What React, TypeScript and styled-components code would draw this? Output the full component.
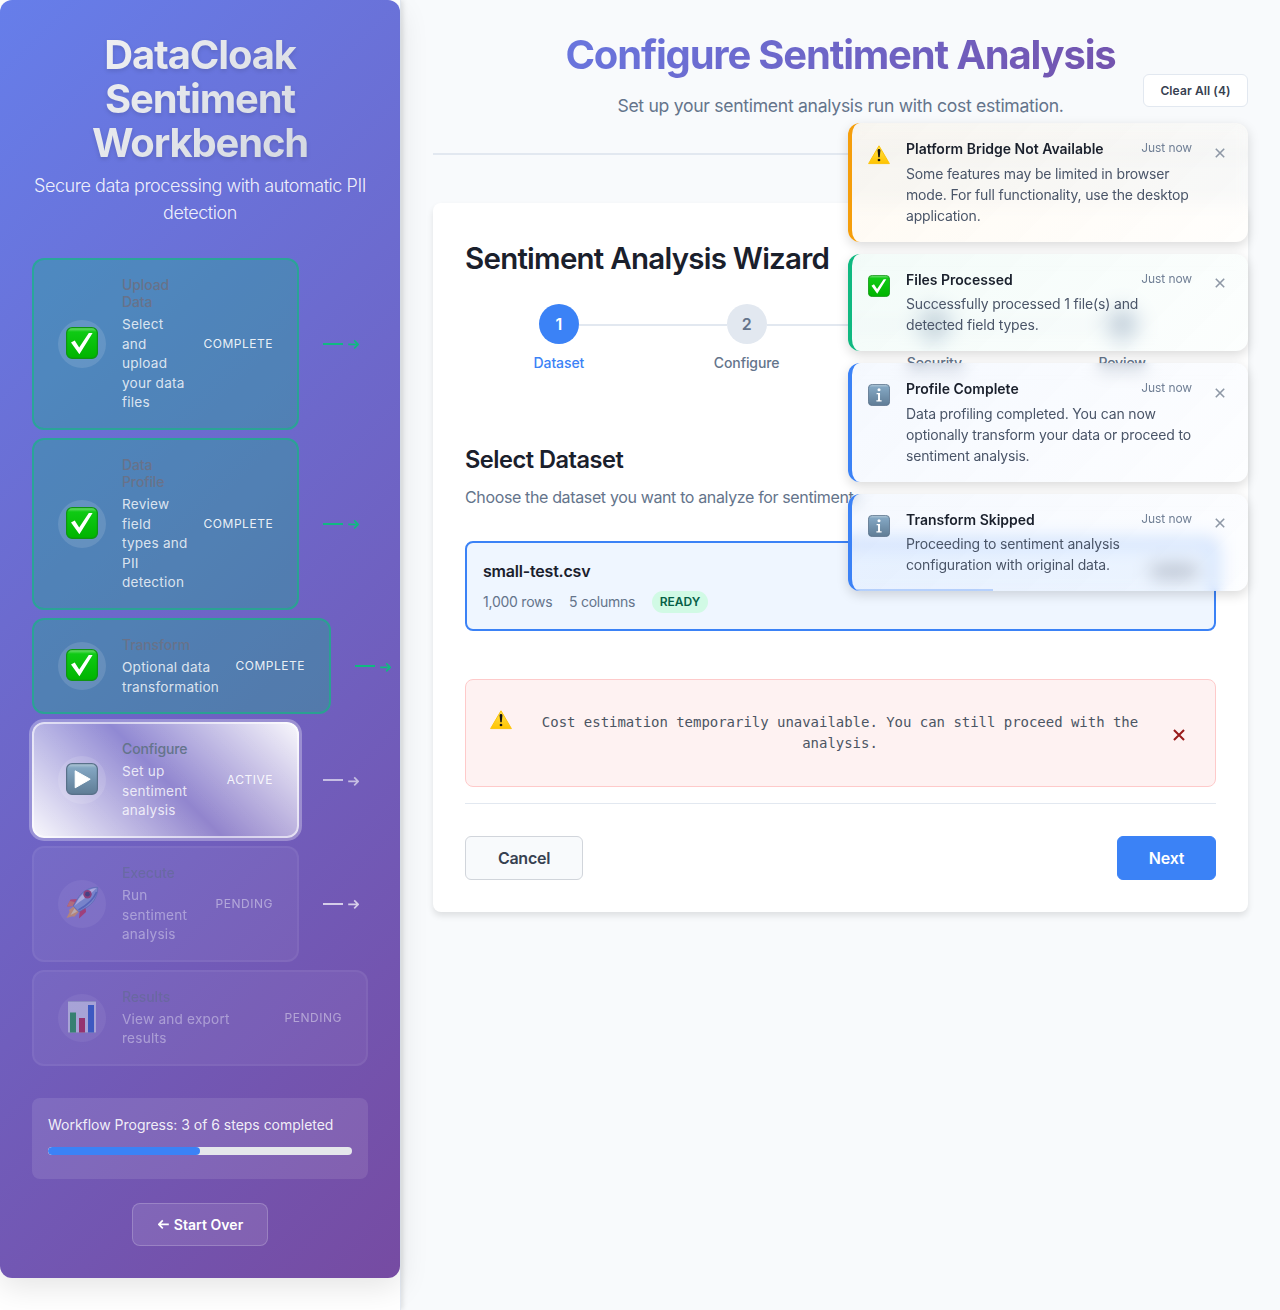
import React from 'react';
import styled, { createGlobalStyle, css } from 'styled-components';

const Global = createGlobalStyle`
  *, *::before, *::after { box-sizing: border-box; }
  body { margin: 0; background: #f8fafc; font-family: Inter, "Liberation Sans", sans-serif; color: #1a202c; }
  h1, h2, h3, p { margin: 0; }
  button { font-family: inherit; cursor: pointer; }
`;

const Page = styled.div`
  display: flex;
  min-height: 1310px;
  position: relative;
  overflow: hidden;
`;

const Aside = styled.aside`
  flex: none;
  width: 401px;
  background: #fff;
  border-right: 1px solid #e2e8f0;
  box-shadow: 2px 0 5px rgba(0, 0, 0, 0.1);
  position: relative;
  z-index: 1;
`;

const Nav = styled.nav`
  height: 1278px;
  padding: 32px;
  border-radius: 12px;
  background: linear-gradient(135deg, #667eea 0%, #764ba2 100%);
  box-shadow: 0 10px 30px rgba(0, 0, 0, 0.1);
  color: #fff;
  display: flex;
  flex-direction: column;
`;

const Brand = styled.h1`
  padding-top: 1px;
  margin-bottom: -1px;
  font-size: 40px;
  line-height: 44px;
  font-weight: 700;
  letter-spacing: -1.15px;
  text-align: center;
  white-space: pre-line;
  color: transparent;
  background: linear-gradient(135deg, #f5f5f5 0%, #cfd4de 100%);
  background-clip: text;
  -webkit-background-clip: text;
  filter: drop-shadow(0 2px 2px rgba(0, 0, 0, 0.12));
`;

const Tagline = styled.p`
  margin: 8px -10px 32px;
  font-size: 18px;
  line-height: 27px;
  font-weight: 300;
  letter-spacing: -0.44px;
  text-align: center;
  white-space: pre-line;
  color: rgba(255, 255, 255, 0.9);
`;

const Steps = styled.div`
  display: flex;
  flex-direction: column;
  gap: 8px;
`;

const StepRow = styled.div`
  display: flex;
  align-items: center;
`;

type State = 'complete' | 'active' | 'pending';

const stateCss = {
  complete: css`
    background: rgba(16, 185, 129, 0.3);
    border-color: rgba(16, 185, 129, 0.6);
  `,
  active: css`
    background: linear-gradient(45deg, rgba(255, 255, 255, 0.96), rgba(255, 255, 255, 0.24) 50%, rgba(255, 255, 255, 0.96)) border-box;
    border-color: rgba(255, 255, 255, 0.6);
    box-shadow: 0 0 0 3px rgba(255, 255, 255, 0.3);
  `,
  pending: css`
    background: rgba(255, 255, 255, 0.1);
    border-color: rgba(255, 255, 255, 0.1);
    opacity: 0.5;
  `,
};

const StepCard = styled.div<{ $state: State; $width: number }>`
  flex: none;
  width: ${(p) => p.$width}px;
  display: flex;
  align-items: center;
  gap: 16px;
  padding: 16px 24px;
  border: 2px solid;
  border-radius: 12px;
  ${(p) => stateCss[p.$state]}
`;

const StepIcon = styled.div`
  flex: none;
  width: 48px;
  height: 48px;
  padding-bottom: 2px;
  border-radius: 50%;
  background: rgba(255, 255, 255, 0.12);
  display: grid;
  place-items: center;
`;

const StepText = styled.div`
  flex: 1;
  white-space: pre;
`;

const StepTitle = styled.div<{ $state: State }>`
  font-size: 14px;
  line-height: 17px;
  font-weight: 500;
  letter-spacing: -0.12px;
  margin-bottom: 5px;
  color: ${(p) => (p.$state === 'complete' ? '#68728a' : '#64748b')};
`;

const StepDesc = styled.div`
  margin-bottom: -1px;
  font-size: 13.6px;
  line-height: 19.6px;
  letter-spacing: 0.22px;
  font-weight: 400;
  color: rgba(255, 255, 255, 0.8);
`;

const StepStatus = styled.div`
  font-size: 12px;
  line-height: 18px;
  letter-spacing: 0.52px;
  color: rgba(255, 255, 255, 0.9);
`;

const Connector = styled.div<{ $color: string }>`
  flex: none;
  display: flex;
  align-items: center;
  gap: 5px;
  margin-left: 24px;
  color: ${(p) => p.$color};
  svg { margin-top: 1px; }
`;

const ConnectorLine = styled.div`
  width: 20px;
  height: 2px;
  background: currentColor;
`;

const ProgressPanel = styled.section`
  margin-top: 32px;
  height: 81px;
  padding: 16px;
  border-radius: 8px;
  background: rgba(255, 255, 255, 0.1);
`;

const ProgressLabel = styled.div`
  font-size: 14px;
  line-height: 22px;
  letter-spacing: -0.02px;
  white-space: nowrap;
  color: rgba(255, 255, 255, 0.9);
`;

const ProgressTrack = styled.div`
  margin-top: 11px;
  height: 8px;
  border-radius: 4px;
  background: #e5e7eb;
  overflow: hidden;
`;

const ProgressFill = styled.div`
  height: 8px;
  border-radius: 4px;
  background: #3b82f6;
`;

const StartOver = styled.button`
  align-self: center;
  margin-top: 24px;
  width: 136px;
  height: 43px;
  padding: 0 0 0 1px;
  border: 1px solid rgba(255, 255, 255, 0.2);
  border-radius: 8px;
  background: rgba(255, 255, 255, 0.1);
  color: #fff;
  font-size: 14px;
  font-weight: 600;
  letter-spacing: 0.05px;
  display: flex;
  align-items: center;
  justify-content: center;
  gap: 5px;
`;

const Main = styled.main`
  flex: 1;
  padding: 32px;
`;

const PageHeader = styled.header`
  height: 123px;
  border-bottom: 2px solid #e2e8f0;
  text-align: center;
`;

const PageTitle = styled.h1`
  font-size: 40px;
  line-height: 46px;
  padding-bottom: 2px;
  font-weight: 700;
  letter-spacing: -1.2px;
  color: transparent;
  background: linear-gradient(135deg, #667eea 0%, #764ba2 100%);
  background-clip: text;
  -webkit-background-clip: text;
`;

const PageSubtitle = styled.p`
  margin-top: 12px;
  font-size: 17.6px;
  line-height: 28px;
  letter-spacing: -0.3px;
  color: #64748b;
`;

const Wizard = styled.section`
  margin-top: 48px;
  height: 709px;
  padding: 32px;
  border-radius: 8px;
  background: #fff;
  box-shadow: 0 4px 6px rgba(0, 0, 0, 0.1);
`;

const WizardTitle = styled.h2`
  font-size: 29.5px;
  line-height: 47px;
  font-weight: 600;
  letter-spacing: -0.75px;
  white-space: nowrap;
`;

const Stepper = styled.div`
  display: flex;
  margin-top: 22px;
  height: 72px;
`;

const StepperItem = styled.div<{ $active?: boolean; $last?: boolean }>`
  flex: 1;
  display: flex;
  flex-direction: column;
  align-items: center;
  position: relative;
  font-size: 14px;
  line-height: 20px;
  font-weight: 500;
  letter-spacing: -0.1px;
  color: ${(p) => (p.$active ? '#3b82f6' : '#64748b')};
  &::after {
    content: '';
    display: ${(p) => (p.$last ? 'none' : 'block')};
    position: absolute;
    top: 20px;
    left: calc(50% + 20px);
    width: calc(100% - 40px);
    height: 2px;
    background: #e2e8f0;
  }
`;

const StepperDot = styled.div<{ $active?: boolean }>`
  width: 40px;
  height: 40px;
  margin-bottom: 9px;
  border-radius: 50%;
  display: grid;
  place-items: center;
  font-size: 16px;
  font-weight: 600;
  background: ${(p) => (p.$active ? '#3b82f6' : '#e2e8f0')};
  color: ${(p) => (p.$active ? '#fff' : '#64748b')};
`;

const SectionTitle = styled.h3`
  margin-top: 66px;
  font-size: 23.6px;
  line-height: 36px;
  font-weight: 600;
  letter-spacing: -0.5px;
`;

const SectionText = styled.p`
  margin-top: 7px;
  font-size: 16px;
  line-height: 24px;
  letter-spacing: -0.36px;
  color: #64748b;
`;

const Dataset = styled.div`
  margin-top: 32px;
  height: 90px;
  padding: 16px;
  border: 2px solid #3b82f6;
  border-radius: 8px;
  background: #eff6ff;
  display: flex;
  align-items: flex-start;
  justify-content: space-between;
`;

const DatasetName = styled.div`
  font-size: 16px;
  line-height: 24px;
  font-weight: 600;
  letter-spacing: -0.2px;
`;

const DatasetMeta = styled.div`
  display: flex;
  align-items: center;
  gap: 16.5px;
  margin-top: 8px;
  font-size: 14px;
  line-height: 22px;
  letter-spacing: -0.24px;
  color: #64748b;
`;

const Ready = styled.span`
  padding: 0 8px;
  height: 22px;
  border-radius: 11px;
  background: #d1fae5;
  color: #065f46;
  font-size: 12px;
  font-weight: 600;
  letter-spacing: 0;
`;

const DatasetBadge = styled.div`
  width: 48px;
  height: 12px;
  margin-top: 6px;
  border-radius: 6px;
  background: #b3bac6;
`;

const Alert = styled.div`
  margin-top: 48px;
  height: 108px;
  padding: 31px 25px 0 24px;
  border: 1px solid #fecaca;
  border-radius: 8px;
  background: #fef2f2;
  display: flex;
  align-items: flex-start;
`;

const AlertIcon = styled.div`
  flex: none;
  width: 22px;
  height: 22px;
  margin-top: -2px;
`;

const AlertText = styled.p`
  flex: 1;
  margin-top: 1px;
  font-family: "DejaVu Sans Mono", "Liberation Mono", monospace;
  font-size: 14px;
  line-height: 21px;
  letter-spacing: -0.03px;
  text-align: center;
  white-space: pre-line;
  color: #4b5563;
`;

const AlertClose = styled.button`
  flex: none;
  width: 22px;
  height: 22px;
  margin-top: 13px;
  padding: 0;
  border: 0;
  background: none;
  color: #991b1b;
  display: grid;
  place-items: center;
`;

const Actions = styled.footer`
  margin-top: 16px;
  padding-top: 32px;
  border-top: 1px solid #e2e8f0;
  display: flex;
  justify-content: space-between;
`;

const Action = styled.button<{ $primary?: boolean }>`
  width: ${(p) => (p.$primary ? 99 : 118)}px;
  height: 44px;
  padding: 0;
  border: 1px solid ${(p) => (p.$primary ? '#3b82f6' : '#d1d5db')};
  border-radius: 6px;
  background: ${(p) => (p.$primary ? '#3b82f6' : '#f8fafc')};
  color: ${(p) => (p.$primary ? '#fff' : '#374151')};
  font-size: 16px;
  font-weight: 600;
  letter-spacing: -0.25px;
`;

const Toasts = styled.div`
  position: absolute;
  z-index: 5;
  top: 74px;
  right: 32px;
  width: 400px;
  display: flex;
  flex-direction: column;
  gap: 12px;
`;

const ClearAll = styled.button`
  align-self: flex-end;
  width: 105px;
  height: 33px;
  margin-bottom: 4px;
  padding: 0;
  border: 1px solid #e2e8f0;
  border-radius: 6px;
  background: #fff;
  color: #374151;
  font-size: 12px;
  font-weight: 600;
  letter-spacing: 0.1px;
`;

const tones = {
  warning: { edge: '#f59e0b', rgb: '245, 158, 11' },
  success: { edge: '#10b981', rgb: '16, 185, 129' },
  info: { edge: '#3b82f6', rgb: '59, 130, 246' },
};
type Tone = keyof typeof tones;

const ToastShell = styled.div`
  position: relative;
`;

/* One pass of blur lets sharp content through near the card's edge; stacked passes hide it. */
const ToastGlass = styled.div<{ $blur: number }>`
  position: absolute;
  inset: 0;
  border-radius: 12px;
  backdrop-filter: blur(${(p) => p.$blur}px);
`;

const ToastCard = styled.article<{ $tone: Tone; $lines: number }>`
  position: relative;
  height: ${(p) => 55.6 + p.$lines * 21}px;
  padding: 16px;
  display: flex;
  overflow: hidden;
  border-left: 4px solid ${(p) => tones[p.$tone].edge};
  border-radius: 12px;
  background: linear-gradient(135deg, rgba(${(p) => tones[p.$tone].rgb}, 0.05), rgba(${(p) => tones[p.$tone].rgb}, 0.01));
  box-shadow: 0 4px 12px rgba(0, 0, 0, 0.15);
`;

const ToastIcon = styled.div`
  flex: none;
  width: 22px;
  height: 22px;
  margin: 5px 16px 0 0;
`;

const ToastBody = styled.div`
  flex: 1;
  min-width: 0;
`;

const ToastHead = styled.div`
  display: flex;
  justify-content: space-between;
  line-height: 19.6px;
`;

const ToastTitle = styled.div`
  font-size: 14px;
  font-weight: 600;
  color: #1a202c;
`;

const ToastTime = styled.time`
  font-size: 12px;
  line-height: 17px;
  letter-spacing: -0.1px;
  color: #718096;
`;

const ToastText = styled.p`
  margin-top: 4px;
  font-size: 14px;
  line-height: 21px;
  letter-spacing: -0.16px;
  white-space: pre;
  color: #4a5568;
`;

const ToastClose = styled.button`
  flex: none;
  width: 24px;
  height: 24px;
  margin: 1.5px 0 0 16px;
  padding: 0;
  border: 0;
  background: none;
  color: #8e98a6;
  display: grid;
  place-items: center;
`;

const ToastTimer = styled.div`
  position: absolute;
  left: 0;
  bottom: 0;
  height: 2px;
  background: rgba(59, 130, 246, 0.3);
`;

const CheckEmoji = ({ size }: { size: number }) => (
  <svg width={size} height={size} viewBox="0 0 32 32">
    <defs>
      <linearGradient id="ck" x1="0" y1="0" x2="0" y2="1">
        <stop offset="0" stopColor="#7be07c" />
        <stop offset=".14" stopColor="#0fca14" />
        <stop offset="1" stopColor="#00b400" />
      </linearGradient>
    </defs>
    <rect x=".6" y=".6" width="30.8" height="30.8" rx="5.5" fill="url(#ck)" stroke="#0f9412" strokeWidth="1.2" />
    <path d="M5 15.5 8.700 13.500 13.200 20.500 22.800 6h3.800L13.400 27.200z" fill="#fff" />
  </svg>
);

const SlateTile = ({ size, children }: { size: number; children: React.ReactNode }) => (
  <svg width={size} height={size} viewBox="0 0 32 32">
    <defs>
      <linearGradient id="sl" x1="0" y1="0" x2="0" y2="1">
        <stop offset="0" stopColor="#b5cbd9" />
        <stop offset=".14" stopColor="#83a6c2" />
        <stop offset="1" stopColor="#5f7c95" />
      </linearGradient>
    </defs>
    <rect x=".6" y=".6" width="30.8" height="30.8" rx="5.5" fill="url(#sl)" stroke="#587089" strokeWidth="1.2" />
    {children}
  </svg>
);

const PlayEmoji = () => (
  <SlateTile size={32}>
    <path d="M9.200 7.800 24.200 16.200 9.200 24.800z" fill="#fff" stroke="#fff" strokeWidth="1" strokeLinejoin="round" />
  </SlateTile>
);

const InfoEmoji = () => (
  <SlateTile size={22}>
    <circle cx="16" cy="8.200" r="2.200" fill="#fff" />
    <path d="M12.500 13h5v10.500h2.300v2h-7.600v-2h2.400V15h-2.100z" fill="#fff" />
  </SlateTile>
);

const WarnEmoji = () => (
  <svg width="22" height="22" viewBox="0 0 22 22">
    <defs>
      <linearGradient id="wn" x1="0" y1="0" x2="0" y2="1">
        <stop offset="0" stopColor="#ffe14d" />
        <stop offset="1" stopColor="#ffc400" />
      </linearGradient>
    </defs>
    <path d="M11 1.800 21.400 19.600H.6z" fill="url(#wn)" stroke="#fcc40c" strokeWidth="1" strokeLinejoin="round" />
    <path d="M9.600 6.400a1.400 1.400 0 0 1 2.800 0L11.700 13.200h-1.400z" fill="#141414" />
    <circle cx="11" cy="16" r="1.350" fill="#141414" />
  </svg>
);

const RocketEmoji = () => (
  <svg width="34" height="34" viewBox="0 0 34 34">
    <path d="M12 13 5.500 13.500 2 20.500l7.500-.5z" fill="#e0343a" />
    <path d="M2 20.500l2.700-5.500 5 1-1.700 4z" fill="#f07a3c" />
    <path d="M20.500 20.500 21 26l-7 6.500.8-8z" fill="#cf1f38" />
    <path d="M8.500 20.500 4 24l.6 2L1.500 32l6-1.800 1.700.6 4.800-5z" fill="#f6a93a" />
    <path d="M9.500 22.500 5.500 29l6.500-3.200z" fill="#fff0a0" />
    <path d="M32.800 1.200C25 1.200 18.500 4.500 14 10.500L8.200 20l5.800 5.800 9-5.300C29.300 16 32.800 9.500 32.800 1.200z" fill="#7fa6d6" stroke="#4a6da6" strokeWidth=".7" />
    <path d="M31.500 2C23.500 3 17.500 7.500 13.500 13l-4 7c6-5.500 14-9.500 22-18z" fill="#e3effb" />
    <path d="M31.600 6C28.500 14 22.500 19 13.500 24" fill="none" stroke="#3e68b4" strokeWidth="1.800" />
    <circle cx="22.500" cy="8.200" r="4.200" fill="#a8203c" />
    <circle cx="22.500" cy="8.200" r="2.400" fill="#1e2448" />
  </svg>
);

const ChartEmoji = () => (
  <svg width="28" height="32" viewBox="0 0 28 32">
    <rect width="28" height="32" fill="#dfe9f2" />
    <path d="M0 .5h28M0 31.500h28" stroke="#a9b9c8" />
    <rect x="2" y="11.500" width="6" height="20" fill="#00a32a" />
    <rect x="11" y="17" width="6" height="14.500" fill="#bb0a26" />
    <rect x="20" y="4" width="6" height="27.500" fill="#0b57c9" />
  </svg>
);

const Arrow = ({ flip }: { flip?: boolean }) => (
  <svg width="11" height="12" viewBox="0 0 11 12" transform={flip ? 'scale(-1 1)' : undefined}>
    <path d="M.2 6.300h9.800M6.200 2.300l4 4-4 4" fill="none" stroke="currentColor" strokeWidth="1.700" />
  </svg>
);

const Cross = ({ size, weight }: { size: number; weight: number }) => (
  <svg width={size} height={size} viewBox="0 0 10 10">
    <path d="M.8.8l8.400 8.400M9.200.8.8 9.200" stroke="currentColor" strokeWidth={weight} />
  </svg>
);

interface Step {
  title: string;
  desc: string;
  state: State;
  icon: React.ReactNode;
  width: number;
  link?: string;
}

const steps: Step[] = [
  { title: 'Upload\nData', desc: 'Select\nand\nupload\nyour data\nfiles', state: 'complete', icon: <CheckEmoji size={32} />, width: 267, link: '#10b981' },
  { title: 'Data\nProfile', desc: 'Review\nfield\ntypes and\nPII\ndetection', state: 'complete', icon: <CheckEmoji size={32} />, width: 267, link: '#10b981' },
  { title: 'Transform', desc: 'Optional data\ntransformation', state: 'complete', icon: <CheckEmoji size={32} />, width: 299, link: '#10b981' },
  { title: 'Configure', desc: 'Set up\nsentiment\nanalysis', state: 'active', icon: <PlayEmoji />, width: 267, link: 'rgba(255,255,255,.6)' },
  { title: 'Execute', desc: 'Run\nsentiment\nanalysis', state: 'pending', icon: <RocketEmoji />, width: 267, link: 'rgba(255,255,255,.7)' },
  { title: 'Results', desc: 'View and export\nresults', state: 'pending', icon: <ChartEmoji />, width: 336 },
];

const toasts: { tone: Tone; title: string; text: string; icon: React.ReactNode; timer?: number }[] = [
  { tone: 'warning', title: 'Platform Bridge Not Available', text: 'Some features may be limited in browser\nmode. For full functionality, use the desktop\napplication.', icon: <WarnEmoji /> },
  { tone: 'success', title: 'Files Processed', text: 'Successfully processed 1 file(s) and\ndetected field types.', icon: <CheckEmoji size={22} /> },
  { tone: 'info', title: 'Profile Complete', text: 'Data profiling completed. You can now\noptionally transform your data or proceed to\nsentiment analysis.', icon: <InfoEmoji /> },
  { tone: 'info', title: 'Transform Skipped', text: 'Proceeding to sentiment analysis\nconfiguration with original data.', icon: <InfoEmoji />, timer: 35.6 },
];

export default function App() {
  const done = steps.filter((s) => s.state === 'complete').length;
  return (
    <Page>
      <Global />
      <Aside>
        <Nav>
          <Brand>{'DataCloak\nSentiment\nWorkbench'}</Brand>
          <Tagline>{'Secure data processing with automatic PII\ndetection'}</Tagline>
          <Steps>
            {steps.map((s) => (
              <StepRow key={s.title}>
                <StepCard $state={s.state} $width={s.width}>
                  <StepIcon>{s.icon}</StepIcon>
                  <StepText>
                    <StepTitle $state={s.state}>{s.title}</StepTitle>
                    <StepDesc>{s.desc}</StepDesc>
                  </StepText>
                  <StepStatus>{s.state.toUpperCase()}</StepStatus>
                </StepCard>
                {s.link && (
                  <Connector $color={s.link}>
                    <ConnectorLine />
                    <Arrow />
                  </Connector>
                )}
              </StepRow>
            ))}
          </Steps>
          <ProgressPanel>
            <ProgressLabel>{`Workflow Progress: ${done} of ${steps.length} steps completed`}</ProgressLabel>
            <ProgressTrack>
              <ProgressFill style={{ width: `${(done / steps.length) * 100}%` }} />
            </ProgressTrack>
          </ProgressPanel>
          <StartOver>
            <Arrow flip />
            Start Over
          </StartOver>
        </Nav>
      </Aside>

      <Main>
        <PageHeader>
          <PageTitle>Configure Sentiment Analysis</PageTitle>
          <PageSubtitle>Set up your sentiment analysis run with cost estimation.</PageSubtitle>
        </PageHeader>
        <Wizard>
          <WizardTitle>Sentiment Analysis Wizard</WizardTitle>
          <Stepper>
            {['Dataset', 'Configure', 'Security', 'Review'].map((label, i) => (
              <StepperItem key={label} $active={i === 0} $last={i === 3}>
                <StepperDot $active={i === 0}>{i + 1}</StepperDot>
                {label}
              </StepperItem>
            ))}
          </Stepper>
          <SectionTitle>Select Dataset</SectionTitle>
          <SectionText>Choose the dataset you want to analyze for sentiment.</SectionText>
          <Dataset>
            <div>
              <DatasetName>small-test.csv</DatasetName>
              <DatasetMeta>
                <span>1,000 rows</span>
                <span>5 columns</span>
                <Ready>READY</Ready>
              </DatasetMeta>
            </div>
            <DatasetBadge />
          </Dataset>
          <Alert>
            <AlertIcon>
              <WarnEmoji />
            </AlertIcon>
            <AlertText>{'Cost estimation temporarily unavailable. You can still proceed with the\nanalysis.'}</AlertText>
            <AlertClose aria-label="Dismiss">
              <Cross size={12} weight={1.7} />
            </AlertClose>
          </Alert>
          <Actions>
            <Action>Cancel</Action>
            <Action $primary>Next</Action>
          </Actions>
        </Wizard>
      </Main>

      <Toasts>
        <ClearAll>{`Clear All (${toasts.length})`}</ClearAll>
        {toasts.map((t) => (
          <ToastShell key={t.title}>
            <ToastGlass $blur={2} />
            <ToastGlass $blur={3} />
            <ToastGlass $blur={5} />
            <ToastGlass $blur={7} />
            <ToastCard $tone={t.tone} $lines={t.text.split('\n').length}>
              <ToastIcon>{t.icon}</ToastIcon>
              <ToastBody>
                <ToastHead>
                  <ToastTitle>{t.title}</ToastTitle>
                  <ToastTime>Just now</ToastTime>
                </ToastHead>
                <ToastText>{t.text}</ToastText>
              </ToastBody>
              <ToastClose aria-label="Close">
                <Cross size={10} weight={1.6} />
              </ToastClose>
              {t.timer && <ToastTimer style={{ width: `${t.timer}%` }} />}
            </ToastCard>
          </ToastShell>
        ))}
      </Toasts>
    </Page>
  );
}
